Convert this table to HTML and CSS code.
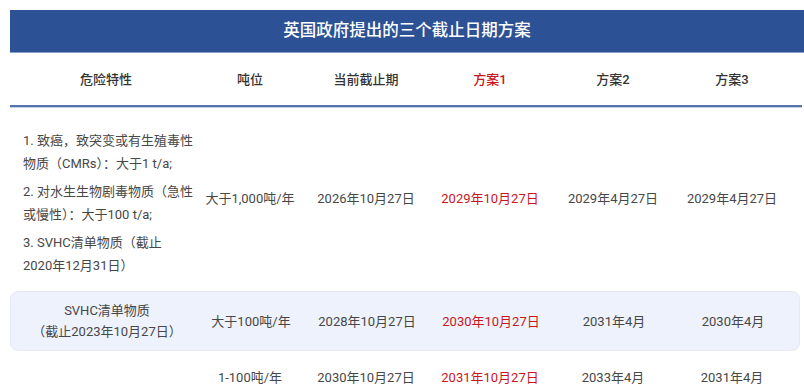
FILE: index.html
```html
<!DOCTYPE html>
<html lang="zh">
<head>
<meta charset="utf-8">
<link rel="stylesheet" href="styles.css">
</head>
<body>
<div class="wrap">
  <div class="title">英国政府提出的三个截止日期方案</div>
  <div class="row head">
    <div class="cell">危险特性</div>
    <div class="cell">吨位</div>
    <div class="cell">当前截止期</div>
    <div class="cell red">方案1</div>
    <div class="cell">方案2</div>
    <div class="cell">方案3</div>
  </div>
  <div class="row r1">
    <div class="cell first">
      <p>1. 致癌，致突变或有生殖毒性<br>物质（CMRs）：大于1 t/a;</p>
      <p>2. 对水生生物剧毒物质（急性<br>或慢性）：大于100 t/a;</p>
      <p>3. SVHC清单物质（截止<br>2020年12月31日）</p>
    </div>
    <div class="cell">大于1,000吨/年</div>
    <div class="cell">2026年10月27日</div>
    <div class="cell red">2029年10月27日</div>
    <div class="cell">2029年4月27日</div>
    <div class="cell">2029年4月27日</div>
  </div>
  <div class="row r2">
    <div class="cell">SVHC清单物质<br>（截止2023年10月27日）</div>
    <div class="cell">大于100吨/年</div>
    <div class="cell">2028年10月27日</div>
    <div class="cell red">2030年10月27日</div>
    <div class="cell">2031年4月</div>
    <div class="cell">2030年4月</div>
  </div>
  <div class="row r3">
    <div class="cell"></div>
    <div class="cell">1-100吨/年</div>
    <div class="cell">2030年10月27日</div>
    <div class="cell red">2031年10月27日</div>
    <div class="cell">2033年4月</div>
    <div class="cell">2031年4月</div>
  </div>
</div>
</body>
</html>
```
FILE: styles.css
```css
html, body {
  margin: 0;
  background: #ffffff;
}
body {
  font-family: Roboto, "Noto Sans CJK SC", sans-serif;
  color: #474747;
  font-size: 13px;
  overflow: hidden;
}
.wrap {
  padding: 10px 0 0 10px;
}
.title {
  background: #2d5195;
  color: #ffffff;
  height: 42px;
  line-height: 42px;
  text-align: center;
  font-size: 16.5px;
  font-weight: 500;
  border-bottom: 1px solid #8aa0c8;
}
.row {
  display: grid;
  grid-template-columns: 192px 96px 136px 112px 134px 104px;
  align-items: center;
  width: 792px;
}
.cell {
  text-align: center;
  line-height: 21px;
}
.red {
  color: #c8161d;
}
.head {
  height: 52px;
  border-bottom: 2px solid #5673ab;
  box-shadow: 0 1px 0 #c5d0e6;
  font-weight: 500;
  color: #333333;
}
.first {
  text-align: left;
  padding: 22px 0 13px 13px;
  line-height: 23px;
}
.first p {
  margin: 0 0 5px;
}
.first p:last-child {
  margin-bottom: 0;
}
.r2 {
  width: 788px;
  height: 58px;
  background: #eef2fc;
  border: 1px solid #e4e9f3;
  border-radius: 8px;
  margin-top: 1px;
}
.r3 {
  padding-top: 16px;
  line-height: 23px;
}
```
